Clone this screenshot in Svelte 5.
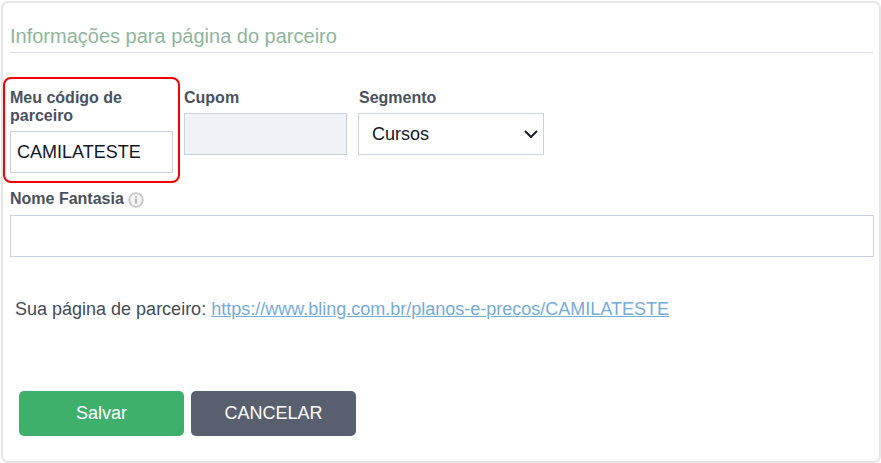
<script>
  let codigo = "CAMILATESTE";
  let segmento = "Cursos";
  let nomeFantasia = "";

  const segmentos = ["Cursos", "Consultoria", "Tecnologia"];
  const linkParceiro = "https://www.bling.com.br/planos-e-precos/" + codigo;
</script>

<div class="card">
  <h2 class="title">Informações para página do parceiro</h2>

  <div class="row">
    <div class="field codigo_box">
      <label for="codigo">Meu código de parceiro</label>
      <input id="codigo" type="text" bind:value={codigo} />
    </div>
    <div class="field cupom">
      <label for="cupom">Cupom</label>
      <input id="cupom" type="text" disabled />
    </div>
    <div class="field segmento">
      <label for="segmento">Segmento</label>
      <div class="select_wrap">
        <select id="segmento" bind:value={segmento}>
          {#each segmentos as option}
            <option value={option}>{option}</option>
          {/each}
        </select>
        <svg class="chevron" width="14" height="8" viewBox="0 0 14 8" aria-hidden="true">
          <path d="M1 1 L7 7 L13 1" fill="none" stroke="#1a1f2b" stroke-width="2" />
        </svg>
      </div>
    </div>
  </div>

  <div class="field nome">
    <label for="nome">
      Nome Fantasia
      <svg class="info" width="16" height="16" viewBox="0 0 16 16" aria-hidden="true">
        <circle cx="8" cy="8" r="6.8" fill="#f3f3f3" stroke="#c8c8c8" stroke-width="1.8" />
        <rect x="7.1" y="6.8" width="1.8" height="4.8" fill="#b0b0b0" />
        <rect x="7.1" y="4.1" width="1.8" height="1.7" fill="#b0b0b0" />
      </svg>
    </label>
    <input id="nome" type="text" bind:value={nomeFantasia} />
  </div>

  <p class="link_line">Sua página de parceiro: <a href={linkParceiro}>{linkParceiro}</a></p>

  <div class="actions">
    <button type="button" class="salvar">Salvar</button>
    <button type="button" class="cancelar">CANCELAR</button>
  </div>
</div>

<style>
  :global(body) {
    margin: 0;
    background-color: #fff;
  }

  .card {
    box-sizing: border-box;
    width: 880px;
    height: 462px;
    margin: 1px 0 0 1px;
    padding: 0 6px 0 7px;
    border: 2px solid #e6e6e6;
    border-radius: 7px;
    font-family: "Liberation Sans", Arial, sans-serif;
    color: #4a5160;
  }

  .title {
    margin: 0 0 25px;
    padding: 21px 0 4px;
    height: 24px;
    line-height: 24px;
    font-size: 20px;
    font-weight: 400;
    color: #8fb59c;
    border-bottom: 1px solid #dcdfe6;
  }

  .row {
    display: flex;
    align-items: flex-start;
    height: 105px;
  }

  .field {
    display: flex;
    flex-direction: column;
  }

  label {
    font-size: 16px;
    font-weight: 700;
    line-height: 18px;
  }

  input,
  select {
    box-sizing: border-box;
    height: 42px;
    border: 1px solid #ccd3e0;
    border-radius: 0;
    background-color: #fff;
    font-family: inherit;
    font-size: 18px;
    color: #111827;
    outline: none;
  }

  input {
    padding: 0 6px;
  }

  .codigo_box {
    box-sizing: border-box;
    width: 177px;
    height: 106px;
    margin: -1px 0 0 -7px;
    padding: 10px 5px 0 5px;
    border: 2px solid #f40000;
    border-radius: 8px;
  }

  .codigo_box label {
    height: 36px;
    margin-bottom: 6px;
  }

  .cupom {
    width: 163px;
    margin-left: 4px;
    padding-top: 11px;
  }

  .cupom label,
  .segmento label {
    height: 18px;
    margin-bottom: 6px;
  }

  .cupom input {
    background-color: #eff2f7;
  }

  .segmento {
    width: 186px;
    margin-left: 11px;
    padding-top: 11px;
  }

  .segmento label {
    padding-left: 1px;
  }

  .select_wrap {
    position: relative;
    display: flex;
  }

  select {
    width: 100%;
    padding: 0 30px 0 13px;
    appearance: none;
  }

  .chevron {
    position: absolute;
    top: 17px;
    right: 6px;
    pointer-events: none;
  }

  .nome {
    margin-top: 7px;
    width: 864px;
  }

  .nome label {
    display: flex;
    align-items: center;
    gap: 4px;
    height: 18px;
    margin-bottom: 7px;
  }

  .info {
    flex-shrink: 0;
    margin-top: 1px;
  }

  .link_line {
    margin: 42px 0 0 5px;
    font-size: 18px;
    line-height: 20px;
    color: #444b59;
  }

  a {
    color: #75acd6;
  }

  .actions {
    display: flex;
    gap: 7px;
    margin: 72px 0 0 9px;
  }

  button {
    width: 165px;
    height: 45px;
    border: none;
    border-radius: 5px;
    color: #fff;
    font-family: inherit;
    font-size: 18px;
    font-weight: 500;
    cursor: pointer;
  }

  .salvar {
    background-color: #3fb06c;
  }

  .cancelar {
    background-color: #585f6e;
  }
</style>
